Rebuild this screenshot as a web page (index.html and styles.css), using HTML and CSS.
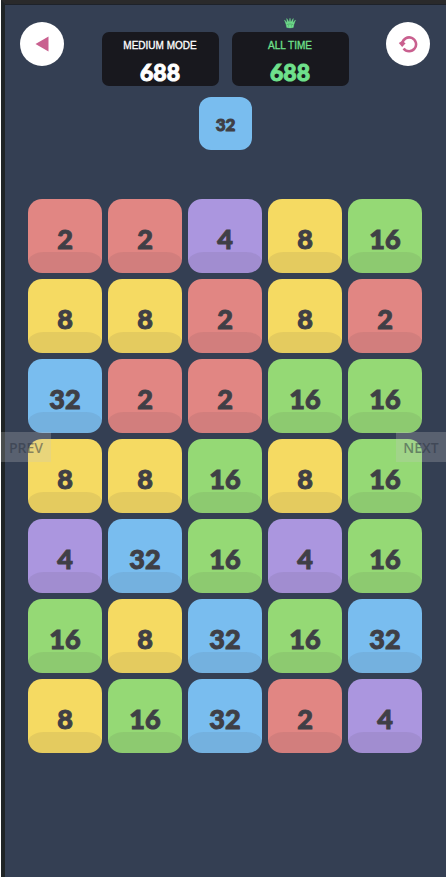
FILE: index.html
```html
<!DOCTYPE html>
<html lang="en">
<head>
    <meta charset="UTF-8">
    <meta name="viewport" content="width=device-width, initial-scale=1.0">
    <title>Number Tiles</title>
    <link rel="stylesheet" href="styles.css">
</head>
<body>
    <div class="game">
        <!-- Back, scores, restart -->
        <header class="header">
            <button class="round-btn" aria-label="Back">
                <svg width="14" height="16" viewBox="0 0 14 16"><path d="M0.5 8L13.5 0.5V15.5Z" fill="#c9608f"/></svg>
            </button>
            <div class="scores">
                <div class="score">
                    <span class="score-label">MEDIUM MODE</span>
                    <span class="score-value">688</span>
                </div>
                <div class="score best">
                    <svg class="crown" width="12" height="12" viewBox="0 0 14 12">
                        <path d="M2.6 8L0.6 2.4L3.8 6L3.2 0.8L6 5.5L7 0.4L8 5.5L10.8 0.8L10.2 6L13.4 2.4L11.4 8L10.8 11.2Q7 12.2 3.2 11.2Z" fill="#6fe08c" stroke="#6fe08c" stroke-width="0.5"/>
                        <path d="M3.4 7.6Q7 6.6 10.6 7.6M4.6 9.4H6M8 9.4H9.4" fill="none" stroke="#33704f" stroke-width="0.6"/>
                    </svg>
                    <span class="score-label">ALL TIME</span>
                    <span class="score-value">688</span>
                </div>
            </div>
            <button class="round-btn" aria-label="Restart">
                <svg width="20" height="18" viewBox="0 0 20 18">
                    <path d="M4.3 8.6A6.9 6.9 0 1 1 5.6 13.4" fill="none" stroke="#c9608f" stroke-width="2.6"/>
                    <path d="M0.8 8L4 6L7.6 8.2L4.2 12Z" fill="#c9608f"/>
                </svg>
            </button>
        </header>

        <div class="next-tile t32">32</div>

        <main class="board">
            <button class="tile t2">2</button>
            <button class="tile t2">2</button>
            <button class="tile t4">4</button>
            <button class="tile t8">8</button>
            <button class="tile t16">16</button>

            <button class="tile t8">8</button>
            <button class="tile t8">8</button>
            <button class="tile t2">2</button>
            <button class="tile t8">8</button>
            <button class="tile t2">2</button>

            <button class="tile t32">32</button>
            <button class="tile t2">2</button>
            <button class="tile t2">2</button>
            <button class="tile t16">16</button>
            <button class="tile t16">16</button>

            <button class="tile t8">8</button>
            <button class="tile t8">8</button>
            <button class="tile t16">16</button>
            <button class="tile t8">8</button>
            <button class="tile t16">16</button>

            <button class="tile t4">4</button>
            <button class="tile t32">32</button>
            <button class="tile t16">16</button>
            <button class="tile t4">4</button>
            <button class="tile t16">16</button>

            <button class="tile t16">16</button>
            <button class="tile t8">8</button>
            <button class="tile t32">32</button>
            <button class="tile t16">16</button>
            <button class="tile t32">32</button>

            <button class="tile t8">8</button>
            <button class="tile t16">16</button>
            <button class="tile t32">32</button>
            <button class="tile t2">2</button>
            <button class="tile t4">4</button>
        </main>
    </div>

    <!-- Gallery navigation over the game -->
    <button class="nav-btn prev">PREV</button>
    <button class="nav-btn next">NEXT</button>
</body>
</html>
```
FILE: styles.css
```css
* {
    margin: 0;
    padding: 0;
    box-sizing: border-box;
}

body {
    position: relative;
    min-height: 100vh;
    padding: 0 1px;
    background-color: #fff;
    font-family: "Liberation Sans", Arial, sans-serif;
}

button {
    border: none;
    cursor: pointer;
}

.game {
    min-height: 100vh;
    padding-bottom: 24px;
    background-color: #343f53;
    border-top: 4px solid #2a2a2b;
    border-left: 4px solid #1f2426;
    box-shadow: inset 0 1px 0 #1e2229;
}

.header {
    display: flex;
    justify-content: space-between;
    align-items: flex-start;
    padding: 18px 16px 0 15px;
}

.round-btn {
    display: flex;
    align-items: center;
    justify-content: center;
    width: 44px;
    height: 44px;
    border-radius: 50%;
    background-color: #fff;
}

.scores {
    display: flex;
    gap: 13px;
    padding-top: 10px;
}

.score {
    position: relative;
    display: flex;
    flex-direction: column;
    align-items: center;
    width: 117px;
    height: 54px;
    padding-top: 8px;
    border-radius: 7px;
    background-color: #18181e;
    color: #fff;
}

.score-label {
    font-size: 10px;
    line-height: 12px;
    -webkit-text-stroke: 0.3px currentColor;
}

.score-value {
    margin-top: 5px;
    font-family: Lato, sans-serif;
    font-size: 23px;
    font-weight: 900;
    line-height: 30px;
    -webkit-text-stroke: 1px currentColor;
}

.best {
    color: #6fe08c;
}

.crown {
    position: absolute;
    top: -15px;
    left: 52px;
}

.next-tile {
    width: 53px;
    height: 53px;
    margin: 11px auto 0;
    border-radius: 12px;
    color: #3f3f46;
    font-family: Lato, sans-serif;
    font-size: 17px;
    font-weight: 900;
    line-height: 56px;
    text-align: center;
    -webkit-text-stroke: 1px currentColor;
}

.board {
    display: grid;
    grid-template-columns: repeat(5, 1fr);
    gap: 6px;
    padding: 49px 24px 0 23px;
}

.tile {
    position: relative;
    aspect-ratio: 1;
    padding-top: 4px;
    border-radius: 14px;
    color: #3f3f46;
    font-family: Lato, sans-serif;
    font-size: 27px;
    font-weight: 900;
    -webkit-text-stroke: 1px currentColor;
}

/* darker bottom edge */
.tile::after {
    content: "";
    position: absolute;
    left: 0;
    right: 0;
    bottom: 0;
    height: 21px;
    border-radius: 16px 16px 14px 14px / 10px 10px 11px 11px;
    background-color: rgba(64, 56, 64, 0.09);
}

.t2 {
    background-color: #e18683;
}

.t4 {
    background-color: #ab96df;
}

.t8 {
    background-color: #f5da62;
}

.t16 {
    background-color: #95d975;
}

.t32 {
    background-color: #79bdef;
}

.nav-btn {
    position: absolute;
    top: 432px;
    width: 50px;
    height: 30px;
    background-color: rgba(200, 200, 200, 0.25);
    color: rgba(40, 48, 62, 0.5);
    font-family: "Open Sans", sans-serif;
    font-size: 14px;
    font-weight: 600;
}

.prev {
    left: 1px;
}

.next {
    right: 1px;
}
```
